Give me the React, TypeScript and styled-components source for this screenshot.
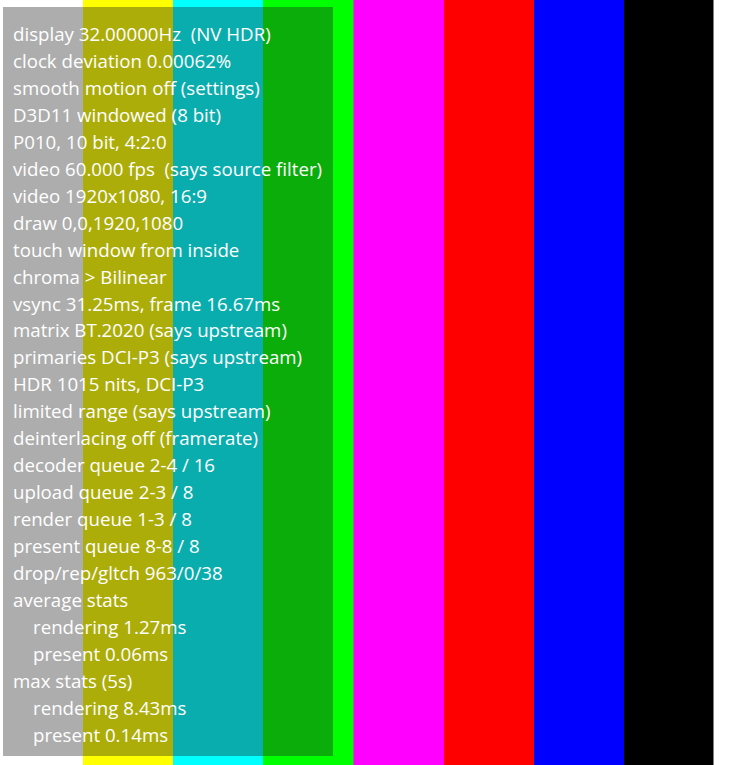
import React from "react";
import styled, { createGlobalStyle } from "styled-components";

const Global = createGlobalStyle`
  html, body { margin: 0; padding: 0; background: #ffffff; }
`;

const Screen = styled.div`
  position: relative;
  width: 740px;
  height: 765px;
  display: flex;
  overflow: hidden;
`;

const Bar = styled.div<{ $color: string; $w?: number }>`
  flex: ${(p) => (p.$w ? `0 0 ${p.$w}px` : "1 1 auto")};
  height: 100%;
  background: ${(p) => p.$color};
`;

const Overlay = styled.div`
  position: absolute;
  left: 3px;
  top: 7px;
  width: 330px;
  height: 749px;
  box-sizing: border-box;
  padding: 14px 0 0 10px;
  background: rgba(28, 28, 28, 0.36);
  display: flex;
  flex-direction: column;
`;

const Line = styled.div<{ $indent?: boolean }>`
  font-family: "Open Sans", "Noto Sans", sans-serif;
  font-size: 18.7px;
  line-height: 26.96px;
  height: 26.96px;
  color: #ffffff;
  white-space: pre;
  padding-left: ${(p) => (p.$indent ? "20px" : "0")};
`;

const bars: { color: string; w?: number }[] = [
  { color: "#ffffff", w: 83 },
  { color: "#ffff00", w: 90 },
  { color: "#00ffff", w: 90 },
  { color: "#00ff00", w: 90 },
  { color: "#808080", w: 1 },
  { color: "#ff00ff", w: 90 },
  { color: "#ff0000", w: 90 },
  { color: "#0000ff", w: 90 },
  { color: "#000000", w: 89 },
  { color: "#808080", w: 1 },
  { color: "#ffffff" },
];

const lines: { t: string; i?: boolean }[] = [
  { t: "display 32.00000Hz  (NV HDR)" },
  { t: "clock deviation 0.00062%" },
  { t: "smooth motion off (settings)" },
  { t: "D3D11 windowed (8 bit)" },
  { t: "P010, 10 bit, 4:2:0" },
  { t: "video 60.000 fps  (says source filter)" },
  { t: "video 1920x1080, 16:9" },
  { t: "draw 0,0,1920,1080" },
  { t: "touch window from inside" },
  { t: "chroma > Bilinear" },
  { t: "vsync 31.25ms, frame 16.67ms" },
  { t: "matrix BT.2020 (says upstream)" },
  { t: "primaries DCI-P3 (says upstream)" },
  { t: "HDR 1015 nits, DCI-P3" },
  { t: "limited range (says upstream)" },
  { t: "deinterlacing off (framerate)" },
  { t: "decoder queue 2-4 / 16" },
  { t: "upload queue 2-3 / 8" },
  { t: "render queue 1-3 / 8" },
  { t: "present queue 8-8 / 8" },
  { t: "drop/rep/gltch 963/0/38" },
  { t: "average stats" },
  { t: "rendering 1.27ms", i: true },
  { t: "present 0.06ms", i: true },
  { t: "max stats (5s)" },
  { t: "rendering 8.43ms", i: true },
  { t: "present 0.14ms", i: true },
];

export default function App() {
  return (
    <>
      <Global />
      <Screen>
        {bars.map((b, k) => (
          <Bar key={k} $color={b.color} $w={b.w} />
        ))}
        <Overlay>
          {lines.map((l, k) => (
            <Line key={k} $indent={l.i}>
              {l.t}
            </Line>
          ))}
        </Overlay>
      </Screen>
    </>
  );
}
